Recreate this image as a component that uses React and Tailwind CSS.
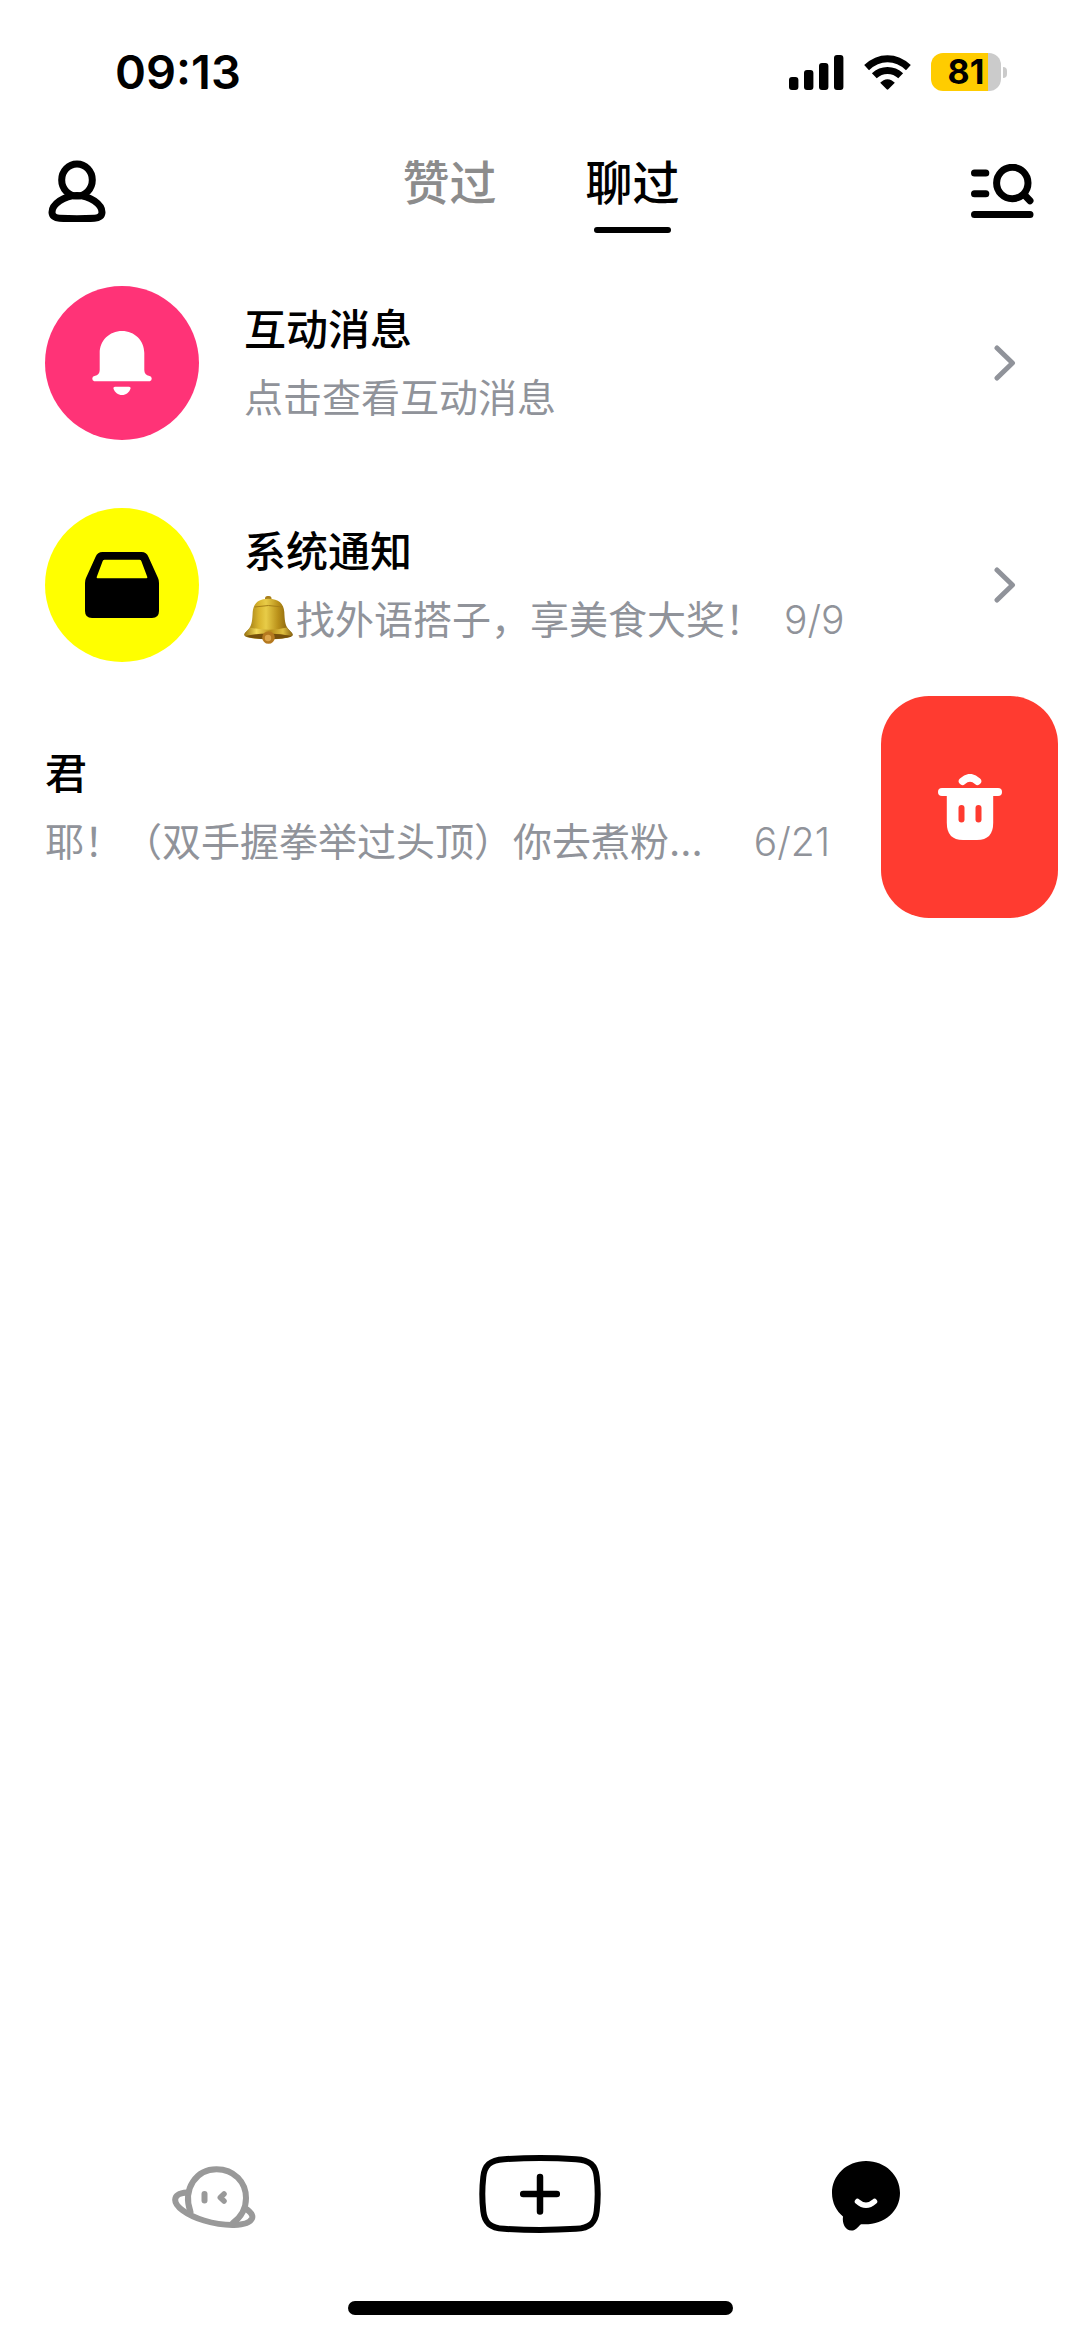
const FONT = "font-[Inter,'Noto_Sans_CJK_SC',sans-serif]";

function SignalIcon() {
  return (
    <svg className="h-[35px] w-[55px]" viewBox="0 0 55 35" aria-hidden="true">
      <rect x="0" y="22" width="9.4" height="13" rx="3" />
      <rect x="15" y="15" width="9.4" height="20" rx="3" />
      <rect x="30" y="8" width="9.4" height="27" rx="3" />
      <rect x="45" y="0" width="9.4" height="35" rx="3" />
    </svg>
  );
}

function WifiIcon() {
  return (
    <svg className="h-[35px] w-[47px]" viewBox="0 0 47 35" aria-hidden="true">
      <g fill="none" stroke="#000" strokeWidth="7">
        <path d="M2.6 12.6C8.5 7 15.8 3.7 23.5 3.7S38.500 7 44.400 12.600" />
        <path d="M10.300 20.800C14 17.300 18.600 15.400 23.500 15.400S33 17.300 36.700 20.800" />
      </g>
      <path d="M16.200 27.800C18.200 25.700 20.700 24.200 23.500 24.200S28.800 25.700 30.800 27.800L24.300 34.300Q23.500 35 22.700 34.300Z" />
    </svg>
  );
}

function Battery() {
  return (
    <div className="flex items-center gap-[2px]" role="img" aria-label="81%">
      <div className="flex h-[38px] w-[70px] items-center justify-center rounded-[12px] bg-linear-to-r from-[#ffcc00] from-82% to-[#cbcbcb] to-82%">
        <span className="text-[34px] leading-[38px] font-bold">81</span>
      </div>
      <div className="h-[11px] w-[4px] rounded-r-full bg-[#cbcbcb]" />
    </div>
  );
}

function PersonIcon() {
  return (
    <svg className="h-[62px] w-[58px]" viewBox="0 0 58 62" fill="none" stroke="#000" strokeWidth="7" aria-hidden="true">
      <ellipse cx="29" cy="20" rx="15.300" ry="16" />
      <path d="M29 35.500C16 35.500 4 44.500 4 52.200C4 56 7 58 11.500 58.300Q29 59.300 46.500 58.300C51 58 54 56 54 52.200C54 44.500 42 35.500 29 35.500Z" />
    </svg>
  );
}

function ListSearchIcon() {
  return (
    <svg className="h-[54px] w-[63px]" viewBox="0 0 63 54" fill="none" stroke="#000" strokeWidth="7" strokeLinecap="round" aria-hidden="true">
      <path d="M3.500 9H14.800M3.500 29.800H14.800M3.500 50.500H59" />
      <circle cx="41.300" cy="19" r="15.700" />
      <path d="M53.500 31L59 36.700" />
    </svg>
  );
}

function BellIcon() {
  return (
    <svg className="h-[64px] w-[62px]" viewBox="0 0 62 64" fill="#fff" aria-hidden="true">
      <path d="M31 0C18.500 0 8.700 9.500 8.700 22V39C8.700 42.500 7 44.500 3.500 44.900A2.800 2.800 0 0 0 3.200 50.300H58.800A2.800 2.800 0 0 0 58.500 44.900C55 44.500 53.300 42.500 53.300 39V22C53.300 9.500 43.500 0 31 0Z" />
      <path d="M24 55.700H38Q40 55.700 39.500 57.500C38.300 61.500 35 64 31 64S23.700 61.500 22.500 57.500Q22 55.700 24 55.700Z" />
    </svg>
  );
}

function TrayIcon() {
  return (
    <svg className="h-[66px] w-[74px]" viewBox="0 0 74 66" aria-hidden="true">
      <path
        fillRule="evenodd"
        d="M17.500 0H56.500Q61.500 0 63.500 5L73 26Q74 28 74 31V59Q74 66 67 66H7Q0 66 0 59V31Q0 28 1 26L10.500 5Q12.500 0 17.500 0ZM19.500 7.700Q18.300 7.700 17.700 9L11.700 25Q11.400 26.300 12.600 26.300H61.400Q62.600 26.300 62.300 25L56.300 9Q55.700 7.700 54.500 7.700Z"
      />
    </svg>
  );
}

function GoldBell() {
  return (
    <svg className="mr-[3px] h-[48px] w-[49px] shrink-0" viewBox="0 0 49 48" role="img" aria-label="🔔">
      <defs>
        <linearGradient id="gold" x1="0" x2="1" y1="0" y2="0">
          <stop offset="0" stopColor="#8d6a10" />
          <stop offset="0.300" stopColor="#d9b52e" />
          <stop offset="0.450" stopColor="#e8cc48" />
          <stop offset="0.700" stopColor="#b99019" />
          <stop offset="1" stopColor="#75510a" />
        </linearGradient>
        <linearGradient id="rim" x1="0" x2="1" y1="0" y2="0">
          <stop offset="0" stopColor="#9b7410" />
          <stop offset="0.250" stopColor="#f3da5a" />
          <stop offset="0.550" stopColor="#b98f1b" />
          <stop offset="0.800" stopColor="#dfbf40" />
          <stop offset="1" stopColor="#8a6410" />
        </linearGradient>
      </defs>
      <rect x="21" y="0" width="6.500" height="6" rx="2.500" fill="#a87f1c" />
      <path d="M24.300 2.800C14 2.800 9.300 8 8.700 16C8.300 24 8 28 5.500 32C3.500 35 .3 36.500 .3 39C.3 41.500 10 43.300 24.500 43.300S48.700 41.500 48.700 39C48.700 36.500 45.500 35 43.500 32C41 28 40.700 24 40.300 16C39.700 8 35 2.800 24.300 2.800Z" fill="url(#gold)" />
      <path d="M6 31.500Q24.500 36 43 31.500Q45 34.500 47.500 36.500Q49.500 38.500 47.500 40Q36 37.500 24.500 37.500T1.500 40Q-.5 38.500 1.500 36.500Q4 34.500 6 31.500Z" fill="url(#rim)" />
      <path d="M1.500 40Q13 37.500 24.500 37.500T47.500 40Q40 43.300 24.500 43.300T1.500 40Z" fill="#76500c" />
      <path d="M10.500 11Q24.500 8 38.500 11" fill="none" stroke="#a67f17" strokeWidth="1" />
      <circle cx="24.500" cy="41.500" r="6.300" fill="#b5791f" />
      <circle cx="24" cy="42" r="3.200" fill="#dda54a" />
    </svg>
  );
}

function Chevron() {
  return (
    <svg className="h-[36px] w-[22px]" viewBox="0 0 22 36" fill="none" stroke="#90939a" strokeWidth="5" strokeLinecap="round" strokeLinejoin="round" aria-hidden="true">
      <path d="M3 3L18.500 18L3 33" />
    </svg>
  );
}

function TrashIcon() {
  return (
    <svg className="h-[66px] w-[64px]" viewBox="0 0 64 66" aria-hidden="true">
      <path d="M24.500 7.300Q32 .3 39.500 7.300" fill="none" stroke="#fff" strokeWidth="7.500" strokeLinecap="round" />
      <rect x="0" y="14" width="64" height="8" rx="4" fill="#fff" />
      <path d="M8.800 18H55.200V49Q55.200 66 39 66H25Q8.800 66 8.800 49Z" fill="#fff" />
      <rect x="20.500" y="31" width="6" height="17.500" rx="3" fill="#ff3b30" />
      <rect x="37.500" y="31" width="6" height="17.500" rx="3" fill="#ff3b30" />
    </svg>
  );
}

function PlanetIcon() {
  return (
    <svg className="h-[78px] w-[84px]" viewBox="0 -11 84 78" fill="none" stroke="#999" strokeWidth="6" strokeLinecap="round" strokeLinejoin="round" aria-hidden="true">
      <path d="M18.500 46C10 22 25 3.200 44.500 3.200C62 3.200 74 16 74 32C74 42 69 51 61 57" />
      <path d="M15 26.500C8 27 3.500 29.500 3.200 33.500C2.700 40 14 49 32 54.500C52 60.500 76 61 80 52.500C81.300 49.500 79 46.500 75 43.500" />
      <path d="M32.500 28V34.500" />
      <path d="M52 28L48.300 31.500L52 35" strokeWidth="5.500" />
    </svg>
  );
}

function PlusIcon() {
  return (
    <svg className="h-[78px] w-[122px]" viewBox="0 0 122 78" fill="none" stroke="#000" strokeLinecap="round" aria-hidden="true">
      <path strokeWidth="6" d="M25 4.200Q61 2 97 4.200C111 5 116.500 10.500 117.700 22Q119.700 39 117.700 56C116.500 67.500 111 73 97 73.800Q61 76 25 73.800C11 73 5.500 67.500 4.300 56Q2.300 39 4.300 22C5.500 10.500 11 5 25 4.200Z" />
      <path strokeWidth="6.500" d="M61 22V56.500M44.200 39H77.800" />
    </svg>
  );
}

function ChatIcon() {
  return (
    <svg className="h-[78px] w-[68px]" viewBox="0 -6 68 78" aria-hidden="true">
      <path d="M34 0C14.500 0 0 14.500 0 32C0 42 4.500 50 11 55.500C10 62 13 69.500 19.500 69.500C24 69.500 25.500 66 29 63.200C51 65 68 51 68 32C68 14.500 53.500 0 34 0Z" />
      <path d="M25.500 40.500Q34 48 42.500 40.500" fill="none" stroke="#fff" strokeWidth="5.500" strokeLinecap="round" />
    </svg>
  );
}

function Texts({ title, emoji, text, date, dateGap }) {
  return (
    <span className="flex min-w-0 flex-col gap-2 pt-[2px] text-left">
      <span className="text-[42px] leading-[60px] font-medium text-black">{title}</span>
      <span className="flex items-center text-[39px] leading-[60px] text-[#90939a]">
        {emoji}
        <span className="truncate">{text}</span>
        {date && <span className={"shrink-0 font-light " + dateGap}>{date}</span>}
      </span>
    </span>
  );
}

function LinkRow({ avatar, ...texts }) {
  return (
    <li>
      <a href="#" className="flex h-[222px] items-center gap-[45px] pr-[64px] pl-[45px]">
        {avatar}
        <Texts {...texts} />
        <span className="ml-auto">
          <Chevron />
        </span>
      </a>
    </li>
  );
}

export default function App() {
  return (
    <div className={"flex min-h-screen flex-col bg-white text-black " + FONT}>
      <div className="flex h-[130px] items-center justify-between pt-[14px] pr-[73px] pl-[115px]">
        <time className="text-[47px] leading-[58px] font-semibold">09:13</time>
        <div className="flex items-center gap-5">
          <SignalIcon />
          <WifiIcon />
          <Battery />
        </div>
      </div>

      <header className="grid h-[122px] grid-cols-[1fr_auto_1fr] items-center pr-[46px] pl-[48px]">
        <button type="button" aria-label="个人" className="justify-self-start">
          <PersonIcon />
        </button>
        <div role="tablist" className="flex gap-[89px] text-[47px] leading-[66px] font-medium">
          <button type="button" role="tab" aria-selected="false" className="flex flex-col items-center gap-[11px] text-[#8c8c8c]">
            赞过
            <span className="h-[6px] w-[77px]" />
          </button>
          <button type="button" role="tab" aria-selected="true" className="flex flex-col items-center gap-[11px]">
            聊过
            <span className="h-[6px] w-[77px] rounded-full bg-black" />
          </button>
        </div>
        <button type="button" aria-label="搜索" className="justify-self-end">
          <ListSearchIcon />
        </button>
      </header>

      <main className="flex-1">
        <ul>
          <LinkRow
            avatar={
              <span className="flex size-[154px] shrink-0 items-center justify-center rounded-full bg-[#ff3377]">
                <BellIcon />
              </span>
            }
            title="互动消息"
            text="点击查看互动消息"
          />
          <LinkRow
            avatar={
              <span className="flex size-[154px] shrink-0 items-center justify-center rounded-full bg-[#ffff00]">
                <TrayIcon />
              </span>
            }
            title="系统通知"
            emoji={<GoldBell />}
            text="找外语搭子，享美食大奖！"
            date="9/9"
            dateGap="ml-5"
          />
          <li className="flex h-[222px] items-center justify-between pr-[22px] pl-[45px]">
            <Texts
              title="君"
              text="耶！（双手握拳举过头顶）你去煮粉…"
              date="6/21"
              dateGap="ml-[51px]"
            />
            <button type="button" aria-label="删除" className="flex h-full w-[177px] shrink-0 items-center justify-center rounded-[48px] bg-[#ff3b30]">
              <TrashIcon />
            </button>
          </li>
        </ul>
      </main>

      <nav className="grid grid-cols-3 items-center justify-items-center px-[51px] pb-[68px]">
        <button type="button" aria-label="发现">
          <PlanetIcon />
        </button>
        <button type="button" aria-label="发布">
          <PlusIcon />
        </button>
        <button type="button" aria-label="消息">
          <ChatIcon />
        </button>
      </nav>
      <div className="mx-auto mb-[22px] h-[14px] w-[385px] rounded-full bg-black" />
    </div>
  );
}
